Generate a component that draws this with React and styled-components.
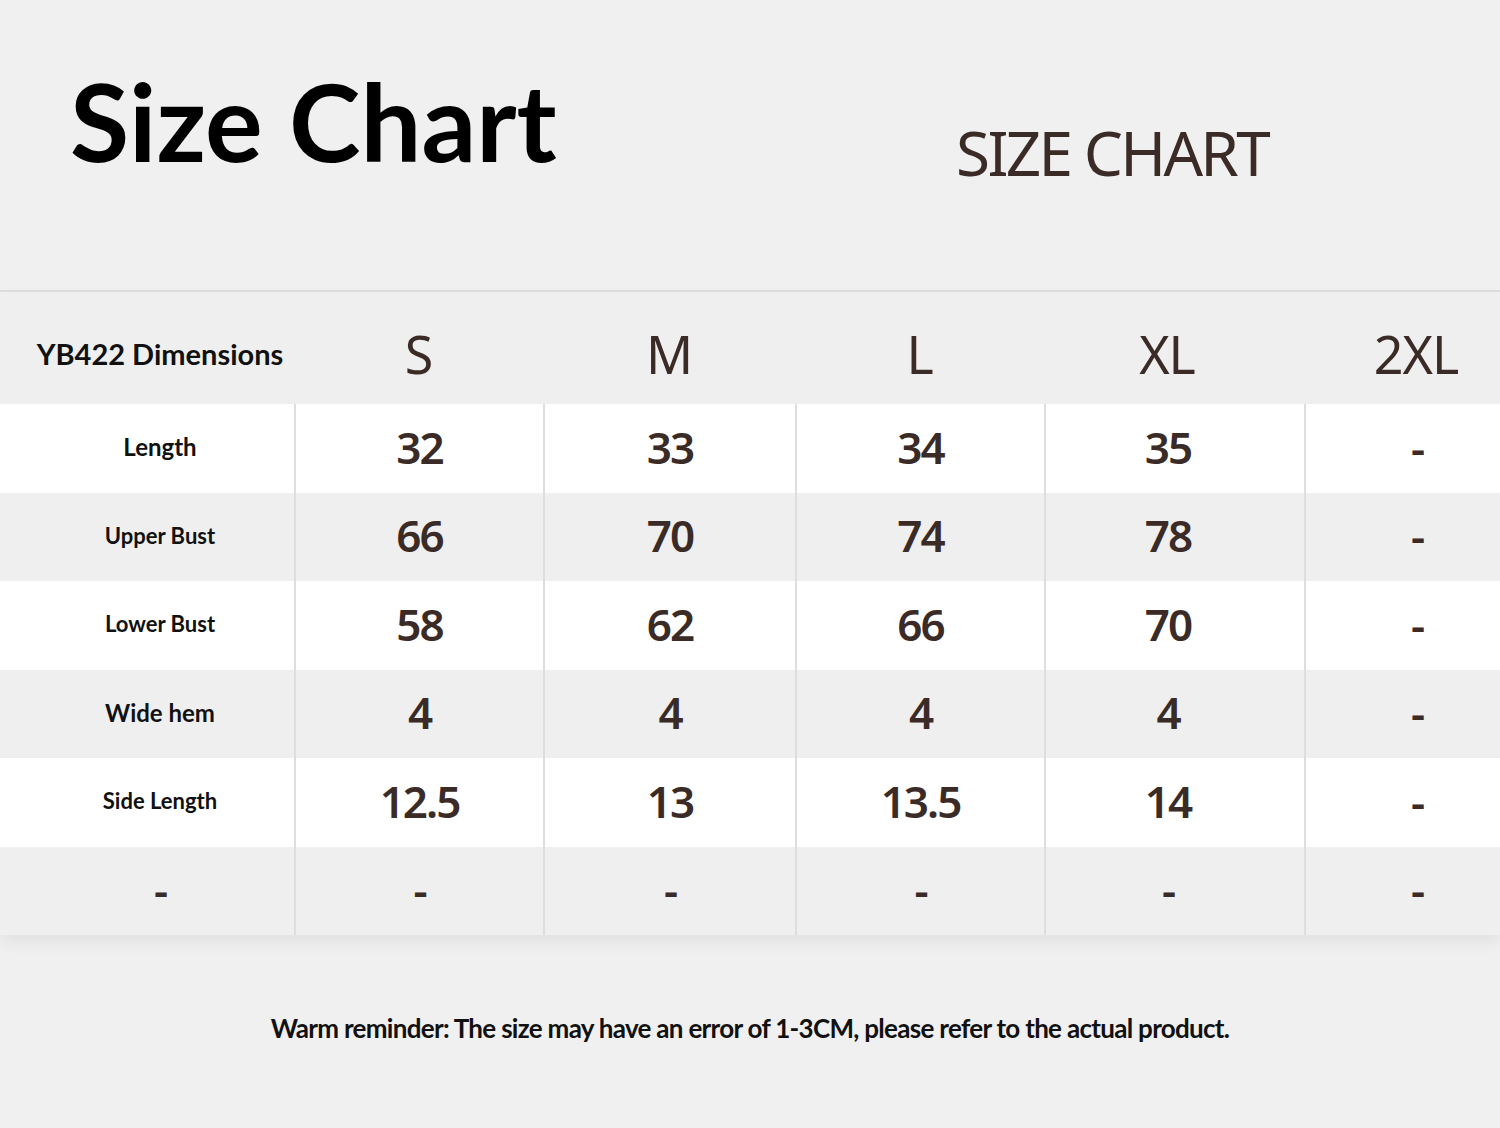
import React from 'react'
import styled, { createGlobalStyle } from 'styled-components'

const GlobalStyle = createGlobalStyle`
  html, body {
    margin: 0;
    padding: 0;
    background: #f0f0f0;
  }
`

const sizes = ['S', 'M', 'L', 'XL', '2XL']

const rows = [
  { label: 'Length', fs: 24, values: ['32', '33', '34', '35', '-'] },
  { label: 'Upper Bust', fs: 22, values: ['66', '70', '74', '78', '-'] },
  { label: 'Lower Bust', fs: 22, values: ['58', '62', '66', '70', '-'] },
  { label: 'Wide hem', fs: 24, values: ['4', '4', '4', '4', '-'] },
  { label: 'Side Length', fs: 22, values: ['12.5', '13', '13.5', '14', '-'] },
  { label: '-', fs: 0, values: ['-', '-', '-', '-', '-'] },
]

const shifts = [0, 0, 0, 14, -28]

const Page = styled.div`
  width: 1500px;
  height: 1128px;
  background: #f0f0f0;
  overflow: hidden;
  display: flex;
  flex-direction: column;
`

const Header = styled.header`
  height: 290px;
  border-bottom: 2px solid #dcdcdc;
  display: flex;
  align-items: flex-start;
  padding: 0 232px 0 70px;
`

const Title = styled.h1`
  margin: 66px 0 0;
  font-family: Lato, 'Liberation Sans', sans-serif;
  font-weight: 700;
  font-size: 108px;
  line-height: 1;
  color: #000;
`

const SubTitle = styled.h2`
  margin: 121px 0 0 auto;
  font-family: 'Noto Sans', 'Open Sans', sans-serif;
  font-weight: 400;
  font-size: 62px;
  letter-spacing: -2.7px;
  line-height: 1;
  color: #3b2b27;
`

const Table = styled.div`
  display: grid;
  grid-template-columns: 294px 249px 252px 249px 260px 1fr;
  box-shadow: 0 8px 14px rgba(0, 0, 0, 0.06);
`

const HeadCell = styled.div`
  height: 112px;
  box-sizing: border-box;
  padding-top: 10px;
  background: #efefef;
  display: flex;
  align-items: center;
  justify-content: center;
  padding-right: ${p => (p.$shift > 0 ? p.$shift : 0)}px;
  padding-left: ${p => (p.$shift < 0 ? -p.$shift : 0)}px;
  font-family: 'Noto Sans', sans-serif;
  font-weight: 400;
  font-size: 52px;
  letter-spacing: -1px;
  color: #3b2b27;
`

const HeadLabel = styled(HeadCell)`
  padding-left: 26px;
  font-family: Lato, 'Liberation Sans', sans-serif;
  font-weight: 700;
  font-size: 29px;
  letter-spacing: 0;
  color: #111;
`

const Cell = styled.div`
  height: 88.5px;
  box-sizing: border-box;
  padding-bottom: 3px;
  background: ${p => (p.$alt ? '#efefef' : '#fff')};
  border-left: 2px solid #dedede;
  display: flex;
  align-items: center;
  justify-content: center;
  padding-right: ${p => (p.$shift > 0 ? p.$shift : 0)}px;
  padding-left: ${p => (p.$shift < 0 ? -p.$shift : 0)}px;
  font-family: 'Noto Sans', sans-serif;
  font-weight: 600;
  font-size: 44px;
  letter-spacing: -2px;
  color: #3b2b27;
`

const LabelCell = styled(Cell)`
  border-left: none;
  padding-left: 26px;
`

const Label = styled.span`
  font-family: Lato, 'Liberation Sans', sans-serif;
  font-weight: 700;
  font-size: ${p => p.$fs}px;
  letter-spacing: 0;
  color: #111;
`

const Footer = styled.p`
  margin: 0;
  padding-top: 80px;
  text-align: center;
  font-family: Lato, 'Liberation Sans', sans-serif;
  font-weight: 700;
  font-size: 26px;
  letter-spacing: -0.7px;
  line-height: 1;
  color: #111;
`

export default function App() {
  return (
    <Page>
      <GlobalStyle />
      <Header>
        <Title>Size Chart</Title>
        <SubTitle>SIZE CHART</SubTitle>
      </Header>
      <Table>
        <HeadLabel>YB422 Dimensions</HeadLabel>
        {sizes.map((s, i) => (
          <HeadCell key={s} $shift={shifts[i]}>{s}</HeadCell>
        ))}
        {rows.map((r, ri) => (
          <React.Fragment key={ri}>
            <LabelCell $alt={ri % 2 === 1}>
              {r.fs ? <Label $fs={r.fs}>{r.label}</Label> : r.label}
            </LabelCell>
            {r.values.map((v, ci) => (
              <Cell key={ci} $alt={ri % 2 === 1} $shift={shifts[ci]}>{v}</Cell>
            ))}
          </React.Fragment>
        ))}
      </Table>
      <Footer>Warm reminder: The size may have an error of 1-3CM, please refer to the actual product.</Footer>
    </Page>
  )
}
